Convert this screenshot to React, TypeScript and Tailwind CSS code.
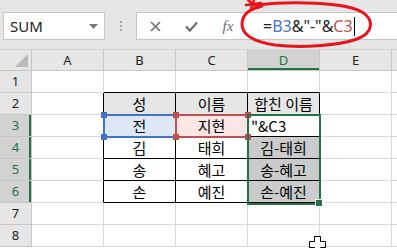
import React from "react";

const COLS = ["A", "B", "C", "D", "E"];
const GREEN = "#217346";

type CellData = { text?: string; align?: "center" | "left" };

const data: Record<string, CellData> = {
  B2: { text: "성" },
  C2: { text: "이름" },
  D2: { text: "합친 이름" },
  B3: { text: "전" },
  C3: { text: "지현" },
  D3: { text: "\"&C3", align: "left" },
  B4: { text: "김" },
  C4: { text: "태희" },
  D4: { text: "김-태희" },
  B5: { text: "송" },
  C5: { text: "혜고" },
  D5: { text: "송-혜고" },
  B6: { text: "손" },
  C6: { text: "예진" },
  D6: { text: "손-예진" },
};

const cellFont = { fontFamily: '"Noto Sans CJK KR", "Noto Sans", sans-serif' };
const uiFont = { fontFamily: '"Noto Sans", "Open Sans", sans-serif' };

function Cell({ r, c }: { r: number; c: number }) {
  const col = COLS[c];
  const key = `${col}${r}`;
  const d = data[key];
  // c: 0=A..4=E
  const rightBlack = r >= 2 && r <= 6 && c >= 0 && c <= 3;
  const bottomBlack = r >= 1 && r <= 6 && c >= 1 && c <= 3;
  let bg = "bg-white";
  if (r === 2 && c >= 1 && c <= 3) bg = "bg-[#e7e6e6]";
  if (key === "B3") bg = "bg-[#dde7f5]";
  if (key === "C3") bg = "bg-[#fbe6e6]";
  if (c === 3 && r >= 4 && r <= 6) bg = "bg-[#cbcbcb]";
  const rb = rightBlack ? "border-r-black" : "border-r-[#d9d9d9]";
  const bb = bottomBlack ? "border-b-black" : "border-b-[#d9d9d9]";
  return (
    <div
      className={`border-r border-b ${rb} ${bb} ${bg} flex items-center ${
        d?.align === "left" ? "justify-start pl-[3px]" : "justify-center"
      } text-[15px] leading-none text-black overflow-hidden whitespace-nowrap`}
      style={cellFont}
    >
      {d?.text}
    </div>
  );
}

export default function App() {
  const rows = [1, 2, 3, 4, 5, 6, 7, 8];
  return (
    <div className="w-[397px] h-[248px] overflow-hidden bg-white relative" style={uiFont}>
      {/* Toolbar */}
      <div className="h-[50px] bg-[#e6e6e6] flex items-start pt-[12px] pl-[3px] border-b border-[#d4d4d4]">
        <div className="w-[102px] h-[28px] bg-white border border-[#c6c6c6] flex items-center justify-between pl-[6px] pr-[6px]">
          <span className="text-[15px] text-[#222] leading-none">SUM</span>
          <svg width="9" height="5" viewBox="0 0 9 5">
            <polygon points="0,0 9,0 4.5,5" fill="#777" />
          </svg>
        </div>
        <div className="w-[31px] h-[28px] flex flex-col items-center justify-center gap-[2px]">
          <div className="w-[2px] h-[2px] bg-[#aaa]" />
          <div className="w-[2px] h-[2px] bg-[#aaa]" />
          <div className="w-[2px] h-[2px] bg-[#aaa]" />
        </div>
        <div className="flex-1 h-[28px] bg-white border border-[#c6c6c6] border-r-0 flex items-center">
          <div className="w-[34px] flex justify-center ml-[1px]">
            <svg width="11" height="11" viewBox="0 0 11 11">
              <path d="M1 1 L10 10 M10 1 L1 10" stroke="#6d6d6d" strokeWidth="1.6" />
            </svg>
          </div>
          <div className="w-[38px] flex justify-center">
            <svg width="13" height="11" viewBox="0 0 13 11">
              <path d="M1 5.5 L5 9.5 L12 1.5" stroke="#6d6d6d" strokeWidth="2.2" fill="none" />
            </svg>
          </div>
          <div className="w-[36px] flex justify-center">
            <span
              className="text-[15px] italic text-[#6d6d6d] leading-none"
              style={{ fontFamily: '"Liberation Serif", serif' }}
            >
              fx
            </span>
          </div>
          <div className="ml-[17px] flex items-center text-[16px] leading-none" style={uiFont}>
            <span className="text-[#222]">=</span>
            <span className="text-[#4472c4]">B3</span>
            <span className="text-[#222]">&amp;"-"&amp;</span>
            <span className="text-[#c0504d]">C3</span>
            <span className="inline-block w-[1px] h-[19px] bg-black ml-[1px]" />
          </div>
        </div>
      </div>

      {/* Sheet */}
      <div className="relative">
        <div className="grid grid-cols-[32px_72px_72px_72px_72px_72px_1fr] grid-rows-[21px_repeat(8,22px)]">
          {/* corner */}
          <div className="bg-[#e6e6e6] border-r border-b border-[#c6c6c6] relative">
            <svg className="absolute right-[3px] bottom-[3px]" width="13" height="13" viewBox="0 0 13 13">
              <polygon points="13,0 13,13 0,13" fill="#b9b9b9" />
            </svg>
          </div>
          {COLS.map((c) => (
            <div
              key={c}
              className={`border-r border-b border-[#c6c6c6] flex items-center justify-center text-[13px] leading-none ${
                c === "D"
                  ? "bg-[#d2d2d2] text-[#217346] shadow-[inset_0_-2px_0_#217346]"
                  : "bg-[#e6e6e6] text-[#222]"
              }`}
            >
              {c}
            </div>
          ))}
          <div className="bg-[#e6e6e6] border-b border-[#c6c6c6]" />
          {rows.map((r) => (
            <React.Fragment key={r}>
              <div
                className={`border-r border-b border-[#c6c6c6] flex items-center justify-center text-[13px] leading-none ${
                  r >= 3 && r <= 6
                    ? "bg-[#d2d2d2] text-[#217346] shadow-[inset_-2px_0_0_#217346]"
                    : "bg-[#e6e6e6] text-[#222]"
                }`}
              >
                {r}
              </div>
              {COLS.map((_, ci) => (
                <Cell key={ci} r={r} c={ci} />
              ))}
              <div className="bg-white border-b border-[#d9d9d9]" />
            </React.Fragment>
          ))}
        </div>

        {/* B3 highlight (blue) */}
        <div className="absolute left-[103px] top-[64px] w-[74px] h-[24px] border-2 border-[#4472c4]">
          <div className="absolute -left-[4px] -top-[4px] w-[6px] h-[6px] bg-[#4472c4]" />
          <div className="absolute -left-[4px] -bottom-[4px] w-[6px] h-[6px] bg-[#4472c4]" />
        </div>
        {/* C3 highlight (red) */}
        <div className="absolute left-[175px] top-[64px] w-[74px] h-[24px] border-2 border-[#c0504d]">
          <div className="absolute -left-[4px] -top-[4px] w-[6px] h-[6px] bg-[#c0504d]" />
          <div className="absolute -left-[4px] -bottom-[4px] w-[6px] h-[6px] bg-[#c0504d]" />
          <div className="absolute -right-[4px] -top-[4px] w-[6px] h-[6px] bg-[#c0504d]" />
          <div className="absolute -right-[4px] -bottom-[4px] w-[6px] h-[6px] bg-[#c0504d]" />
        </div>
        {/* D3:D6 selection (green) */}
        <div className="absolute left-[247px] top-[64px] w-[74px] h-[91px] border-2 border-[#217346]">
          <div className="absolute -right-[4px] -bottom-[4px] w-[6px] h-[6px] bg-[#217346] border border-white box-content" />
        </div>
      </div>

      {/* Red hand-drawn annotation */}
      <svg className="absolute left-0 top-0 pointer-events-none" width="397" height="60" viewBox="0 0 397 60">
        <path
          d="M256 5 C290 1, 345 2, 362 12 C375 20, 373 33, 357 39 C338 46, 300 48, 275 45 C255 42, 242 35, 242 24 C242 15, 249 9, 262 6"
          stroke="#e8141c"
          strokeWidth="3"
          fill="none"
          strokeLinecap="round"
        />
        <path
          d="M248 0 L258 8 M254 0 L251 9 M246 5 L261 3"
          stroke="#e8141c"
          strokeWidth="2.5"
          fill="none"
          strokeLinecap="round"
        />
      </svg>

      {/* Cursor */}
      <svg className="absolute left-[309px] top-[236px]" width="17" height="17" viewBox="0 0 17 17">
        <polygon
          points="5.5,0.5 11.5,0.5 11.5,5.5 16.5,5.5 16.5,11.5 11.5,11.5 11.5,16.5 5.5,16.5 5.5,11.5 0.5,11.5 0.5,5.5 5.5,5.5"
          fill="white"
          stroke="black"
          strokeWidth="1"
        />
      </svg>
    </div>
  );
}
